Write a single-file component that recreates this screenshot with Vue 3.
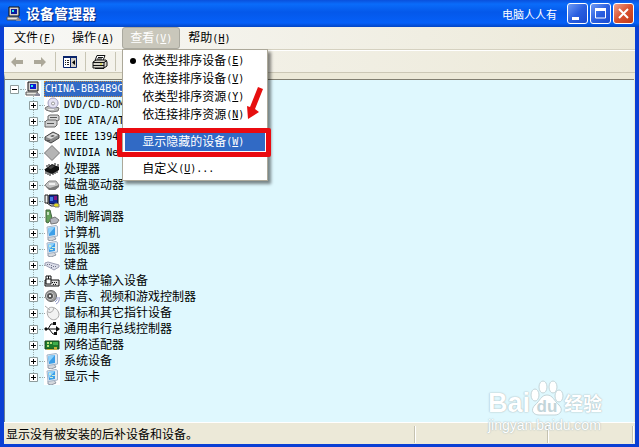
<template>
  <div class="window">
    <header class="titlebar">
      <svg class="app-icon" viewBox="0 0 16 16">
        <path d="M3 1h10v9H3z" fill="#d6d3ce" stroke="#111" />
        <path d="M5 3h6v5H5z" fill="#0a1c9c" />
        <path d="M6 4h2v2H6z" fill="#2ee" />
        <path d="M1 11h11l2 3H1z" fill="#e8e6e0" stroke="#555" />
        <path d="M11 12l4 1v2h-5z" fill="#889" />
      </svg>
      <h1 class="title">设备管理器</h1>
      <span class="author">电脑人人有</span>
      <div class="controls">
        <button class="control" aria-label="最小化">
          <svg viewBox="0 0 19 19"><path d="M4 13h7v3H4z" fill="#fff" /></svg>
        </button>
        <button class="control" aria-label="最大化">
          <svg viewBox="0 0 19 19"><path d="M4.500 5h10v9h-10z" fill="none" stroke="#fff" /><path d="M4 4h11v3H4z" fill="#fff" /></svg>
        </button>
        <button class="control close" aria-label="关闭">
          <svg viewBox="0 0 19 19"><path d="M5 5l9 9M14 5l-9 9" stroke="#fff" stroke-width="2" /></svg>
        </button>
      </div>
    </header>

    <nav class="menubar">
      <div v-for="m in menus" :key="m.key" class="menu">
        <button class="menu-button" :class="{ open: m.key === openMenu }" @click="toggle(m.key)">
          {{ m.label }}<span class="latin">(<u>{{ m.key }}</u>)</span>
        </button>
        <div v-if="m.key === 'V' && openMenu === 'V'" class="dropdown">
          <template v-for="item in viewItems" :key="item.label + item.key">
            <hr v-if="item.separator" class="separator" />
            <button class="dropdown-item" :class="{ checked: item.checked, active: item.active }">
              {{ item.label }}<span class="latin">(<u>{{ item.key }}</u>){{ item.tail }}</span>
            </button>
          </template>
          <div class="highlight"></div>
          <svg class="arrow" viewBox="0 0 20 36">
            <path d="M13 1l5 2-8 20 4 3-11 7-1-13 3 1z" fill="#e60f0f" />
          </svg>
        </div>
      </div>
    </nav>

    <div class="toolbar">
      <button class="tool" aria-label="后退">
        <svg viewBox="0 0 16 16"><path d="M2 8l5-5v3h7v4H7v3z" fill="#aca899" /></svg>
      </button>
      <button class="tool" aria-label="前进">
        <svg viewBox="0 0 16 16"><path d="M14 8L9 3v3H2v4h7v3z" fill="#aca899" /></svg>
      </button>
      <span class="divider"></span>
      <button class="tool" aria-label="显示树">
        <svg viewBox="0 0 16 16">
          <path d="M1.500 2.500h13v11h-13z" fill="#fff" stroke="#0a246a" />
          <path d="M1 2h14v2H1zM8 3h1v10H8z" fill="#0a246a" />
          <path d="M3 6h1v1H3zM5 6h2v1H5zM3 8h1v1H3zM5 8h2v1H5zM3 10h1v1H3zM5 10h2v1H5z" fill="#222" />
          <path d="M9 4h5v9H9z" fill="#d4d0c8" />
          <path d="M13 6v5l-3-2.500z" fill="#000" />
        </svg>
      </button>
      <span class="divider"></span>
      <button class="tool" aria-label="打印">
        <svg viewBox="0 0 16 16">
          <path d="M5 1.500h8l-2 5H3z" fill="#fff" stroke="#111" />
          <path d="M6 3.500h5M5 5h5" stroke="#111" />
          <path d="M1 8l3-2h10l1 2v4l-3 2H1z" fill="#d8d5cb" stroke="#111" />
          <path d="M1 8.500h11l3-2M1 11.500h11M12 8v6" stroke="#111" fill="none" />
          <path d="M3 14.500h9" stroke="#111" />
          <path d="M8 9.500h2v1H8z" fill="#cc0" />
        </svg>
      </button>
      <span class="divider"></span>
    </div>

    <main class="pane">
      <div class="row root">
        <button class="toggle" aria-label="折叠">
          <svg viewBox="0 0 9 9"><path d="M.5.5h8v8h-8z" fill="#fff" stroke="#8e9c9c" /><path d="M2 4.500h5" stroke="#000" /></svg>
        </button>
        <svg class="icon" viewBox="0 0 16 16">
          <path d="M3 1h10v9H3z" fill="#d6d3ce" stroke="#111" />
          <path d="M5 3h6v5H5z" fill="#0a1ccf" />
          <path d="M6 4h2v2H6z" fill="#2ee" />
          <path d="M1 11h11l2 3H1z" fill="#e8e6e0" stroke="#555" />
          <path d="M11 12l4 1v2h-5z" fill="#889" />
        </svg>
        <span class="name latin selected">CHINA-BB34B9C</span>
      </div>
      <ul class="tree">
        <li v-for="d in devices" :key="d.name" class="row">
          <button class="toggle" aria-label="展开">
            <svg viewBox="0 0 9 9"><path d="M.5.5h8v8h-8z" fill="#fff" stroke="#8e9c9c" /><path d="M2 4.500h5M4.500 2v5" stroke="#000" /></svg>
          </button>
          <svg class="icon" viewBox="0 0 16 16">
            <path
              v-for="(s, i) in icons[d.icon]"
              :key="i"
              :d="s[0]"
              :fill="s[1]"
              :stroke="s[2] || 'none'"
            />
          </svg>
          <span class="name" :class="{ latin: d.latin }">{{ d.name }}</span>
        </li>
      </ul>
      <div class="watermark">
        <div class="brand">
          <span>Bai</span>
          <svg class="paw" viewBox="0 0 34 36">
            <g fill="#fff" stroke="#c3d5d9">
              <ellipse cx="5" cy="15" rx="4" ry="6" />
              <ellipse cx="13" cy="7" rx="4" ry="6" />
              <ellipse cx="23" cy="7" rx="4" ry="6" />
              <ellipse cx="29" cy="16" rx="4" ry="6" />
              <path d="M17 15c6 0 7 6 12 10 5 5 1 10-4 10H9c-6 0-9-5-4-10 5-4 6-10 12-10z" />
            </g>
            <text x="17" y="32" text-anchor="middle">du</text>
          </svg>
          <span class="brand-cn">经验</span>
        </div>
        <div class="url">jingyan.baidu.com</div>
      </div>
    </main>

    <footer class="statusbar">
      <span class="status">显示没有被安装的后补设备和设备。</span>
      <span class="cell wide"></span>
      <span class="cell"></span>
      <span class="cell end"></span>
    </footer>
  </div>
</template>

<script setup>
import { ref } from 'vue';

const openMenu = ref('V');

const menus = [
  { label: '文件', key: 'F' },
  { label: '操作', key: 'A' },
  { label: '查看', key: 'V' },
  { label: '帮助', key: 'H' },
];

const viewItems = [
  { label: '依类型排序设备', key: 'E', checked: true },
  { label: '依连接排序设备', key: 'V' },
  { label: '依类型排序资源', key: 'Y' },
  { label: '依连接排序资源', key: 'N' },
  { label: '显示隐藏的设备', key: 'W', active: true, separator: true },
  { label: '自定义', key: 'U', tail: '...', separator: true },
];

const devices = [
  { name: 'DVD/CD-ROM', icon: 'disc', latin: true },
  { name: 'IDE ATA/AT', icon: 'ide', latin: true },
  { name: 'IEEE 1394', icon: 'drive', latin: true },
  { name: 'NVIDIA Ne', icon: 'diamond', latin: true },
  { name: '处理器', icon: 'cpu' },
  { name: '磁盘驱动器', icon: 'disk' },
  { name: '电池', icon: 'battery' },
  { name: '调制解调器', icon: 'modem' },
  { name: '计算机', icon: 'monitor' },
  { name: '监视器', icon: 'display' },
  { name: '键盘', icon: 'keyboard' },
  { name: '人体学输入设备', icon: 'hid' },
  { name: '声音、视频和游戏控制器', icon: 'speaker' },
  { name: '鼠标和其它指针设备', icon: 'mouse' },
  { name: '通用串行总线控制器', icon: 'usb' },
  { name: '网络适配器', icon: 'network' },
  { name: '系统设备', icon: 'monitor' },
  { name: '显示卡', icon: 'display' },
];

const monitor = [
  ['M4 12l6-1 2 3-5 2-3-1z', '#d5d8dd', '#8f98a5'],
  ['M3 2l9-1.500 1.500 1V11L4 12.500z', '#e3ebf3', '#a3b3c6'],
  ['M4 3l7-1v8l-6 1z', '#3d9fe8'],
  ['M4 3l7-1-6 7z', '#8fd0fa'],
];

// [path, fill, stroke]
const icons = {
  disc: [
    ['M1 11l5-3 9 3-1 3-6 1-6-2z', '#b9b9b9', '#777'],
    ['M9 1a5 5 0 1 0 .1 0z', '#e4e2f3', '#9a98b8'],
    ['M9 5a1.500 1.500 0 1 0 .1 0z', '#fff', '#888'],
    ['M4 12h6v1H4z', '#eee'],
  ],
  ide: [
    ['M4 3l2-1h8l1 1v4l-2 1H4z', '#d8d8d8', '#666'],
    ['M1 9l2-2h9l1 1v4l-2 2H1z', '#cfcfcf', '#666'],
    ['M3 10h7v1H3zM6 4h7v1H6z', '#555'],
  ],
  drive: [
    ['M1 8l8-5 6 3v3l-8 5-6-3z', '#8b8b8b', '#444'],
    ['M2 8l7-4 5 2-7 4z', '#dcdcdc'],
    ['M6 7l3-1 2 1-3 1zM3 11h3v1H3z', '#555'],
  ],
  diamond: [['M8 .5l7.500 7.500L8 15.500.5 8z', '#b5b5b5', '#777']],
  cpu: [
    ['M1 8l7-5 7 3v3l-7 4-7-3z', '#111'],
    ['M2 9v4M4 10v4M6 11v4M9 11v3M11 10v3M13 8v4M3 6V4M5 5V3M11 4V2M14 6V3', 'none', '#111'],
    ['M4 7l4-3 3 1-4 3z', '#444'],
  ],
  disk: [
    ['M1 8l4-4h7l3 4-3 4H5z', '#c4c4c4', '#888'],
    ['M1 9l5 2 9-3v2l-4 3H5z', '#777'],
    ['M5 6h6v2H5z', '#eee'],
  ],
  battery: [
    ['M5 2h9v9H5z', '#122a9a', '#111'],
    ['M6 4h3v4H6z', '#4a7be0'],
    ['M10 3h3v4h-3z', '#7f1680'],
    ['M1 2h3v8H1zM3 10l4 3h4', '#eee', '#222'],
    ['M9 12l3-2 3 1v3h-4z', '#e4dc22', '#777'],
  ],
  modem: [
    ['M2 1h4l2 8-4 5-2-1z', '#64a058', '#40633d'],
    ['M6 10l5-2 4 3-2 3-6 1z', '#b3b5bd', '#777'],
    ['M3 3h2v3H3z', '#c7dfc1'],
  ],
  monitor,
  display: [
    ...monitor,
    ['M5 4h2v2H5zM8 6h3v1H8zM6 8h3v1H6z', '#c9ebd8'],
  ],
  keyboard: [
    ['M1 6l3-1 11 3v2l-5 3L1 8z', '#dadce8', '#9ea1b4'],
    ['M3 7h1v1H3zM5 7h1v1H5zM7 8h1v1H7zM9 9h1v1H9zM11 9h1v1h-1zM7 10h1v1H7z', '#6f7287'],
  ],
  hid: [
    ['M1 7h14v6H1z', '#ddd', '#111'],
    ['M8 9h1v1H8zM10 9h1v1h-1zM12 9h1v1h-1zM9 11h1v1H9zM11 11h1v1h-1z', '#111'],
    ['M2 3h5v8H2zM4.500 3v3M2 6h5', '#fff', '#111'],
  ],
  speaker: [
    ['M7 1.500a5.500 5.500 0 1 0 .1 0z', '#9a9a9a', '#666'],
    ['M6 3.500a3.500 3.500 0 1 0 .1 0z', '#555', '#ccc'],
    ['M5 6h2v2H5z', '#eee'],
    ['M13 8q1 3-2 5M15 8q1 5-3 7', 'none', '#8d94c4'],
  ],
  mouse: [
    ['M5 3C8 1 14 3 15 9c0 5-5 7-8 5-4-2-5-8-2-11z', '#f2f2f2', '#aaa'],
    ['M4 7q4 2 6-4M6 5L1 1', 'none', '#aaa'],
  ],
  usb: [
    ['M1 8h12M4 8l3-5h3M5 8l4 5h2', 'none', '#111'],
    ['M12 5l4 3-4 3zM0 8l2-2 2 2-2 2zM9 1h3v3H9zM10 11h3v3h-3z', '#111'],
  ],
  network: [
    ['M1 4h14v8H1z', '#1d7a2c', '#18481e'],
    ['M3 5h2v2H3zM6 5h2v2H6zM3 8h2v2H3z', '#b8e078'],
    ['M9 5h5v3H9z', '#3fae4c'],
    ['M3 12h6v1H3zM10 10h3v3h-3z', '#c5b13c'],
  ],
};

const toggle = (key) => {
  openMenu.value = openMenu.value === key ? '' : key;
};
</script>

<style>
body {
  margin: 0;
}
</style>

<style scoped>
* {
  box-sizing: border-box;
}

.window {
  display: flex;
  flex-direction: column;
  min-height: 100vh;
  padding: 0 4px 3px 4px;
  background: #0a3fd4;
  font-family: "Liberation Sans", "Noto Sans CJK SC", sans-serif;
  font-size: 12px;
  line-height: 16px;
  color: #000;
}

button {
  padding: 0;
  border: 0;
  background: none;
  font: inherit;
  color: inherit;
}

svg {
  display: block;
}

.latin {
  font-family: "DejaVu Sans Mono", "Noto Sans CJK SC", monospace;
  font-size: 10px;
}

.titlebar {
  display: flex;
  align-items: center;
  height: 27px;
  margin: 0 -4px;
  padding: 0 5px 0 6px;
  background: linear-gradient(#0a50dc, #0a6cfa 15%, #0458ea 45%, #0560f8 85%, #0345c4);
}

.app-icon {
  width: 16px;
  height: 16px;
}

.title {
  flex: 1;
  margin: 0 0 0 4px;
  font-size: 14px;
  font-weight: bold;
  color: #fff;
  text-shadow: 1px 1px 1px #0a2a80;
}

.author {
  margin-right: 10px;
  font-family: "Noto Sans CJK SC", sans-serif;
  font-size: 11px;
  color: #fff;
}

.controls {
  display: flex;
  gap: 2px;
}

.control {
  width: 21px;
  height: 21px;
  border: 1px solid #fff;
  border-radius: 3px;
  background: linear-gradient(135deg, #6f9bf5, #2a5fe0 50%, #1a4bd0);
}

.close {
  background: linear-gradient(135deg, #f0a08a, #d9512f 50%, #c03a18);
}

.menubar {
  display: flex;
  height: 23px;
  padding: 0 2px;
  border-bottom: 1px solid #d5d1c0;
  background: linear-gradient(90deg, #f8f8f6, #ece9d8);
}

.menu {
  position: relative;
}

.menu-button {
  height: 22px;
  padding: 0 7px;
  border: 1px solid transparent;
  white-space: nowrap;
}

.menu-button.open {
  border-color: #aaa99f;
  border-radius: 3px;
  background: #c9c7bb;
  color: #fff;
}

.dropdown {
  position: absolute;
  z-index: 1;
  top: 22px;
  left: 0;
  width: 146px;
  padding: 2px;
  border: 1px solid #aca899;
  background: #fff;
  box-shadow: 3px 3px 3px #0007;
}

.dropdown-item {
  display: flex;
  align-items: center;
  width: 100%;
  height: 18px;
  padding-left: 17px;
  white-space: nowrap;
}

.dropdown-item.checked {
  padding-left: 5px;
}

.dropdown-item.checked::before {
  width: 6px;
  height: 6px;
  margin-right: 6px;
  border-radius: 50%;
  background: #000;
  content: "";
}

.dropdown-item.active {
  background: #316ac5;
  color: #fff;
}

.separator {
  height: 1px;
  margin: 4px 0;
  border: 0;
  background: #e4e2d8;
}

.highlight {
  position: absolute;
  top: 78px;
  right: -4px;
  left: -6px;
  height: 29px;
  border: 5px solid #ea0a10;
  border-radius: 2px;
}

.arrow {
  position: absolute;
  top: 36px;
  right: 2px;
  width: 20px;
  height: 36px;
}

.toolbar {
  display: flex;
  align-items: center;
  height: 23px;
  padding: 0 2px;
  border-top: 1px solid #fff;
  border-bottom: 1px solid #cbc7b5;
  background: linear-gradient(90deg, #f6f5f0, #ece9d8);
}

.tool {
  width: 23px;
  height: 20px;
  padding: 0 3px;
}

.tool svg {
  width: 16px;
  height: 16px;
}

.divider {
  width: 1px;
  height: 19px;
  margin: 0 3px;
  background: #c8c5b4;
}

.pane {
  position: relative;
  flex: 1;
  padding: 2px 0 32px 5px;
  border-top: 6px solid #ece9d8;
  border-right: 1px solid #ece9d8;
  border-left: 1px solid #6a7f92;
  background: #dff8fe;
  box-shadow: inset 0 1px #817e70;
}

.row {
  display: flex;
  align-items: center;
  height: 16px;
}

.toggle,
.toggle svg {
  width: 9px;
  height: 9px;
}

.toggle {
  position: relative;
}

.toggle::after {
  position: absolute;
  top: 4px;
  left: 10px;
  width: 6px;
  border-top: 1px dotted #9aa9a9;
  content: "";
}

.tree {
  margin: 0;
  padding: 0 0 0 19px;
  list-style: none;
}

.tree .toggle::before {
  position: absolute;
  top: -7px;
  left: 4px;
  height: 7px;
  border-left: 1px dotted #9aa9a9;
  content: "";
}

.icon {
  width: 16px;
  height: 16px;
  margin: 0 3px 0 6px;
  background: #fff;
}

.name {
  padding: 0 1px;
  white-space: nowrap;
}

.selected {
  background: #316ac5;
  outline: 1px dotted #d08a3a;
  outline-offset: -1px;
  color: #fff;
}

.watermark {
  position: absolute;
  right: 32px;
  bottom: -12px;
  font-family: "Liberation Sans", sans-serif;
  color: #fff;
  text-shadow: 0 0 1px #a9bcc0, 0 0 2px #b5c4c6;
}

.brand {
  display: flex;
  align-items: flex-end;
  font-size: 27px;
  font-weight: bold;
  line-height: 26px;
}

.paw {
  width: 34px;
  height: 36px;
}

.paw text {
  fill: #c3d5d9;
  font-size: 17px;
  font-weight: bold;
  text-shadow: none;
}

.brand-cn {
  font-family: "Noto Sans CJK SC", sans-serif;
  font-size: 19px;
}

.url {
  font-size: 14px;
  line-height: 18px;
}

.statusbar {
  display: flex;
  align-items: center;
  height: 22px;
  padding: 2px 0 0 2px;
  border-top: 1px solid #fff;
  background: #ece9d8;
}

.status {
  flex: 1;
}

.cell {
  width: 85px;
  height: 17px;
  border-left: 1px solid #c5c2b0;
  box-shadow: inset 1px 0 #fff;
}

.cell.wide {
  width: 133px;
}

.cell.end {
  width: 3px;
}
</style>
